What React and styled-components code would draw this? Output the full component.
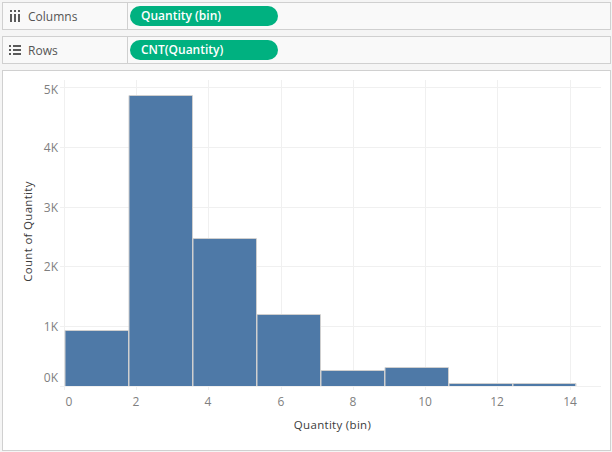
import React from "react";
import styled, { createGlobalStyle } from "styled-components";

const Global = createGlobalStyle`
  html, body { margin: 0; padding: 0; background: #f5f5f5; }
  body { width: 612px; height: 452px; overflow: hidden; font-family: "Open Sans", "Noto Sans", sans-serif; }
`;

const Page = styled.div`
  width: 612px;
  height: 452px;
  box-sizing: border-box;
  padding: 2px 1px 1px 2px;
  display: flex;
  flex-direction: column;
  gap: 6px;
`;

const Shelf = styled.div`
  display: flex;
  height: 28px;
  box-sizing: border-box;
  border: 1px solid #d0d0d0;
  background: #f9f9f9;
`;

const ShelfLabel = styled.div`
  width: 125px;
  flex: none;
  box-sizing: border-box;
  display: flex;
  align-items: center;
  gap: 7px;
  padding-left: 6px;
  border-right: 1px solid #d0d0d0;
  color: #555;
  font-size: 12px;
`;

const IconSlot = styled.span`
  width: 12px;
  flex: none;
  display: flex;
  justify-content: center;
`;

const ShelfBody = styled.div`
  flex: 1;
  display: flex;
  align-items: center;
  padding-left: 2px;
`;

const Pill = styled.div`
  width: 148px;
  height: 20px;
  box-sizing: border-box;
  padding-left: 11px;
  border-radius: 10px;
  background: #00b180;
  color: #fff;
  font-size: 12px;
  font-weight: 600;
  line-height: 19px;
`;

const ChartCard = styled.div`
  flex: 1;
  min-height: 0;
  box-sizing: border-box;
  border: 1px solid #d0d0d0;
  background: #fff;
`;

const ChartSvg = styled.svg`
  display: block;
  width: 100%;
  height: 100%;
`;

const Tick = styled.text`
  font-family: "Open Sans", "Noto Sans", sans-serif;
  font-size: 12px;
  fill: #7f7f7f;
`;

const AxisTitle = styled.text`
  font-family: "Open Sans", "Noto Sans", sans-serif;
  font-size: 11.5px;
  letter-spacing: 0.3px;
  fill: #3c3c3c;
`;

const ColumnsIcon = () => (
  <svg width="11" height="12" viewBox="0 0 11 12" fill="#5a5a5a">
    <rect x="0" y="0" width="2" height="2" />
    <rect x="0" y="4" width="2" height="8" />
    <rect x="4" y="0" width="2" height="2" />
    <rect x="4" y="4" width="2" height="8" />
    <rect x="8" y="0" width="2" height="2" />
    <rect x="8" y="4" width="2" height="8" />
  </svg>
);

const RowsIcon = () => (
  <svg width="12" height="10" viewBox="0 0 12 10" fill="#5a5a5a">
    <rect x="0" y="0" width="2" height="2" />
    <rect x="4" y="0" width="8" height="2" />
    <rect x="0" y="4" width="2" height="2" />
    <rect x="4" y="4" width="8" height="2" />
    <rect x="0" y="8" width="2" height="2" />
    <rect x="4" y="8" width="8" height="2" />
  </svg>
);

const xTicks = [
  [64, 0, 69], [136, 2, 136], [208, 4, 208], [281, 6, 281],
  [353, 8, 353], [425, 10, 425], [497, 12, 497], [570, 14, 570],
];
const yTicks = [
  [87, "5K", 94], [147, "4K", 152], [207, "3K", 212], [266, "2K", 271], [326, "1K", 331], [386, "0K", 382],
];
const bars = [
  [65, 128, 330], [129, 192, 95], [193, 256, 238], [257, 320, 314],
  [321, 384, 370], [385, 448, 367], [449, 512, 383], [513, 575.5, 383],
];

const Chart = () => (
  <ChartSvg viewBox="3 71 607 379">
    {xTicks.map(([x]) => (
      <line key={x} x1={x + 0.5} x2={x + 0.5} y1={80} y2={390} stroke="#f0f0f0" />
    ))}
    {yTicks.map(([y]) => (
      <line key={y} x1={60} x2={601} y1={y + 0.5} y2={y + 0.5} stroke="#f0f0f0" />
    ))}
    {bars.map(([a, b, top]) => (
      <rect key={a} x={a} y={top} width={b - a} height={386 - top} fill="#4e79a7" />
    ))}
    {bars.map(([a, b, top]) => (
      <path key={a} d={`M${a} 386V${top + 0.5}H${b + 0.5}V386`} fill="none" stroke="#cfcfcf" strokeWidth="1" />
    ))}
    {xTicks.map(([x, l, cx]) => (
      <Tick key={x} x={cx} y={406} textAnchor="middle">{l}</Tick>
    ))}
    {yTicks.map(([, l, base]) => (
      <Tick key={l} x={58} y={base} textAnchor="end">{l}</Tick>
    ))}
    <AxisTitle x={332.5} y={429} textAnchor="middle">Quantity (bin)</AxisTitle>
    <AxisTitle x={32} y={231.5} textAnchor="middle" transform="rotate(-90 32 231.5)">Count of Quantity</AxisTitle>
  </ChartSvg>
);

export default function App() {
  return (
    <Page>
      <Global />
      <Shelf>
        <ShelfLabel><IconSlot><ColumnsIcon /></IconSlot>Columns</ShelfLabel>
        <ShelfBody><Pill>Quantity (bin)</Pill></ShelfBody>
      </Shelf>
      <Shelf>
        <ShelfLabel><IconSlot><RowsIcon /></IconSlot>Rows</ShelfLabel>
        <ShelfBody><Pill>CNT(Quantity)</Pill></ShelfBody>
      </Shelf>
      <ChartCard><Chart /></ChartCard>
    </Page>
  );
}
